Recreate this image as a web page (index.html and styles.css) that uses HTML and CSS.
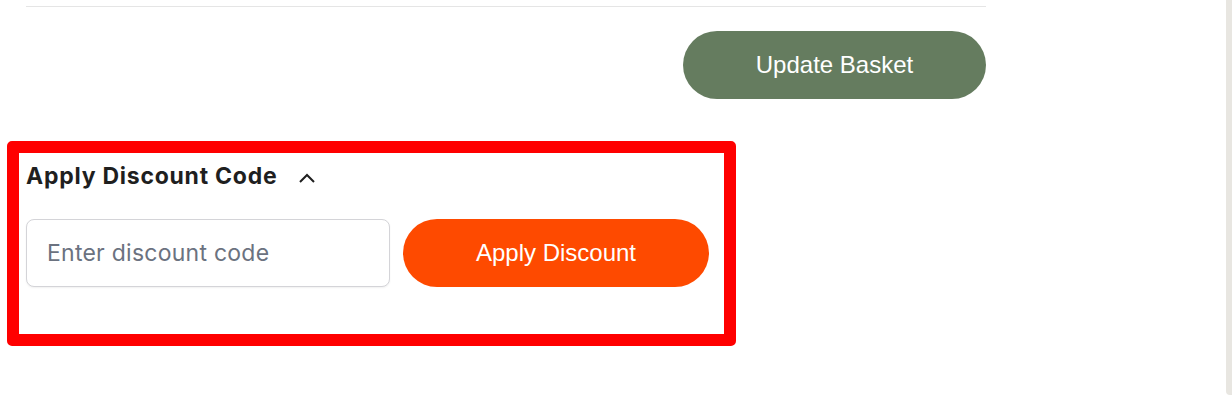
FILE: index.html
```html
<!DOCTYPE html>
<html lang="en">
<head>
<meta charset="utf-8">
<title>Basket</title>
<link rel="stylesheet" href="styles.css">
</head>
<body>
<div class="page">
  <main class="main">
    <div class="divider"></div>
    <div class="actions">
      <button class="btn btn-update" type="button">Update Basket</button>
    </div>
    <section class="discount">
      <div class="discount-head">
        <h2 class="discount-title">Apply Discount Code</h2>
        <svg class="chevron" width="16" height="10" viewBox="0 0 16 10" aria-hidden="true">
          <path d="M1 9 L8 2 L15 9" fill="none" stroke="#1f1f1f" stroke-width="2"/>
        </svg>
      </div>
      <form class="discount-row">
        <input class="discount-input" type="text" placeholder="Enter discount code">
        <button class="btn btn-apply" type="button">Apply Discount</button>
      </form>
    </section>
  </main>
  <div class="rail"></div>
</div>
</body>
</html>
```
FILE: styles.css
```css
html, body {
  margin: 0;
  padding: 0;
  background: #ffffff;
}

.page {
  display: flex;
  width: 1232px;
  height: 399px;
  overflow: hidden;
  font-family: "Liberation Sans", Arial, sans-serif;
}

.main {
  flex: 1;
  display: flex;
  flex-direction: column;
  padding-top: 6px;
}

.divider {
  margin-left: 26px;
  width: 960px;
  border-top: 1px solid #e5e5e5;
}

.actions {
  margin-left: 26px;
  width: 960px;
  margin-top: 24px;
  display: flex;
  justify-content: flex-end;
}

.btn {
  border: none;
  height: 68px;
  border-radius: 34px;
  color: #ffffff;
  font-family: "Liberation Sans", Arial, sans-serif;
  font-size: 24px;
  cursor: pointer;
  padding: 0;
}

.btn-update {
  width: 303px;
  background: #657c5f;
}

.btn-apply {
  width: 306px;
  background: #fe4a00;
}

.discount {
  margin-top: 42px;
  margin-left: 7px;
  width: 698px;
  height: 174px;
  border: 12px solid #ff0000;
  border-radius: 5px;
  padding: 7px 0 0 7px;
  box-sizing: content-box;
}

.discount-head {
  display: flex;
  align-items: center;
  height: 32px;
}

.discount-title {
  margin: 0;
  font-family: Inter, "Noto Sans", sans-serif;
  font-weight: 700;
  font-size: 23px;
  letter-spacing: 0.75px;
  line-height: 32px;
  color: #1f1f1f;
}

.chevron {
  margin-left: 22px;
  margin-top: 4px;
  overflow: visible;
}

.discount-row {
  display: flex;
  gap: 13px;
  margin: 27px 0 0 0;
}

.discount-input {
  box-sizing: border-box;
  width: 364px;
  height: 68px;
  border: 1px solid #d4d4d8;
  border-radius: 8px;
  padding: 0 0 0 20px;
  font-family: Inter, "Noto Sans", sans-serif;
  font-size: 23px;
  letter-spacing: 0.25px;
  color: #1f2937;
  box-shadow: 0 1px 2px rgba(0, 0, 0, 0.06);
  outline: none;
}

.discount-input::placeholder {
  color: #6b7280;
}

.rail {
  width: 6px;
  height: 395px;
  background: #e8e6e1;
  border-bottom-left-radius: 4px;
}
```
